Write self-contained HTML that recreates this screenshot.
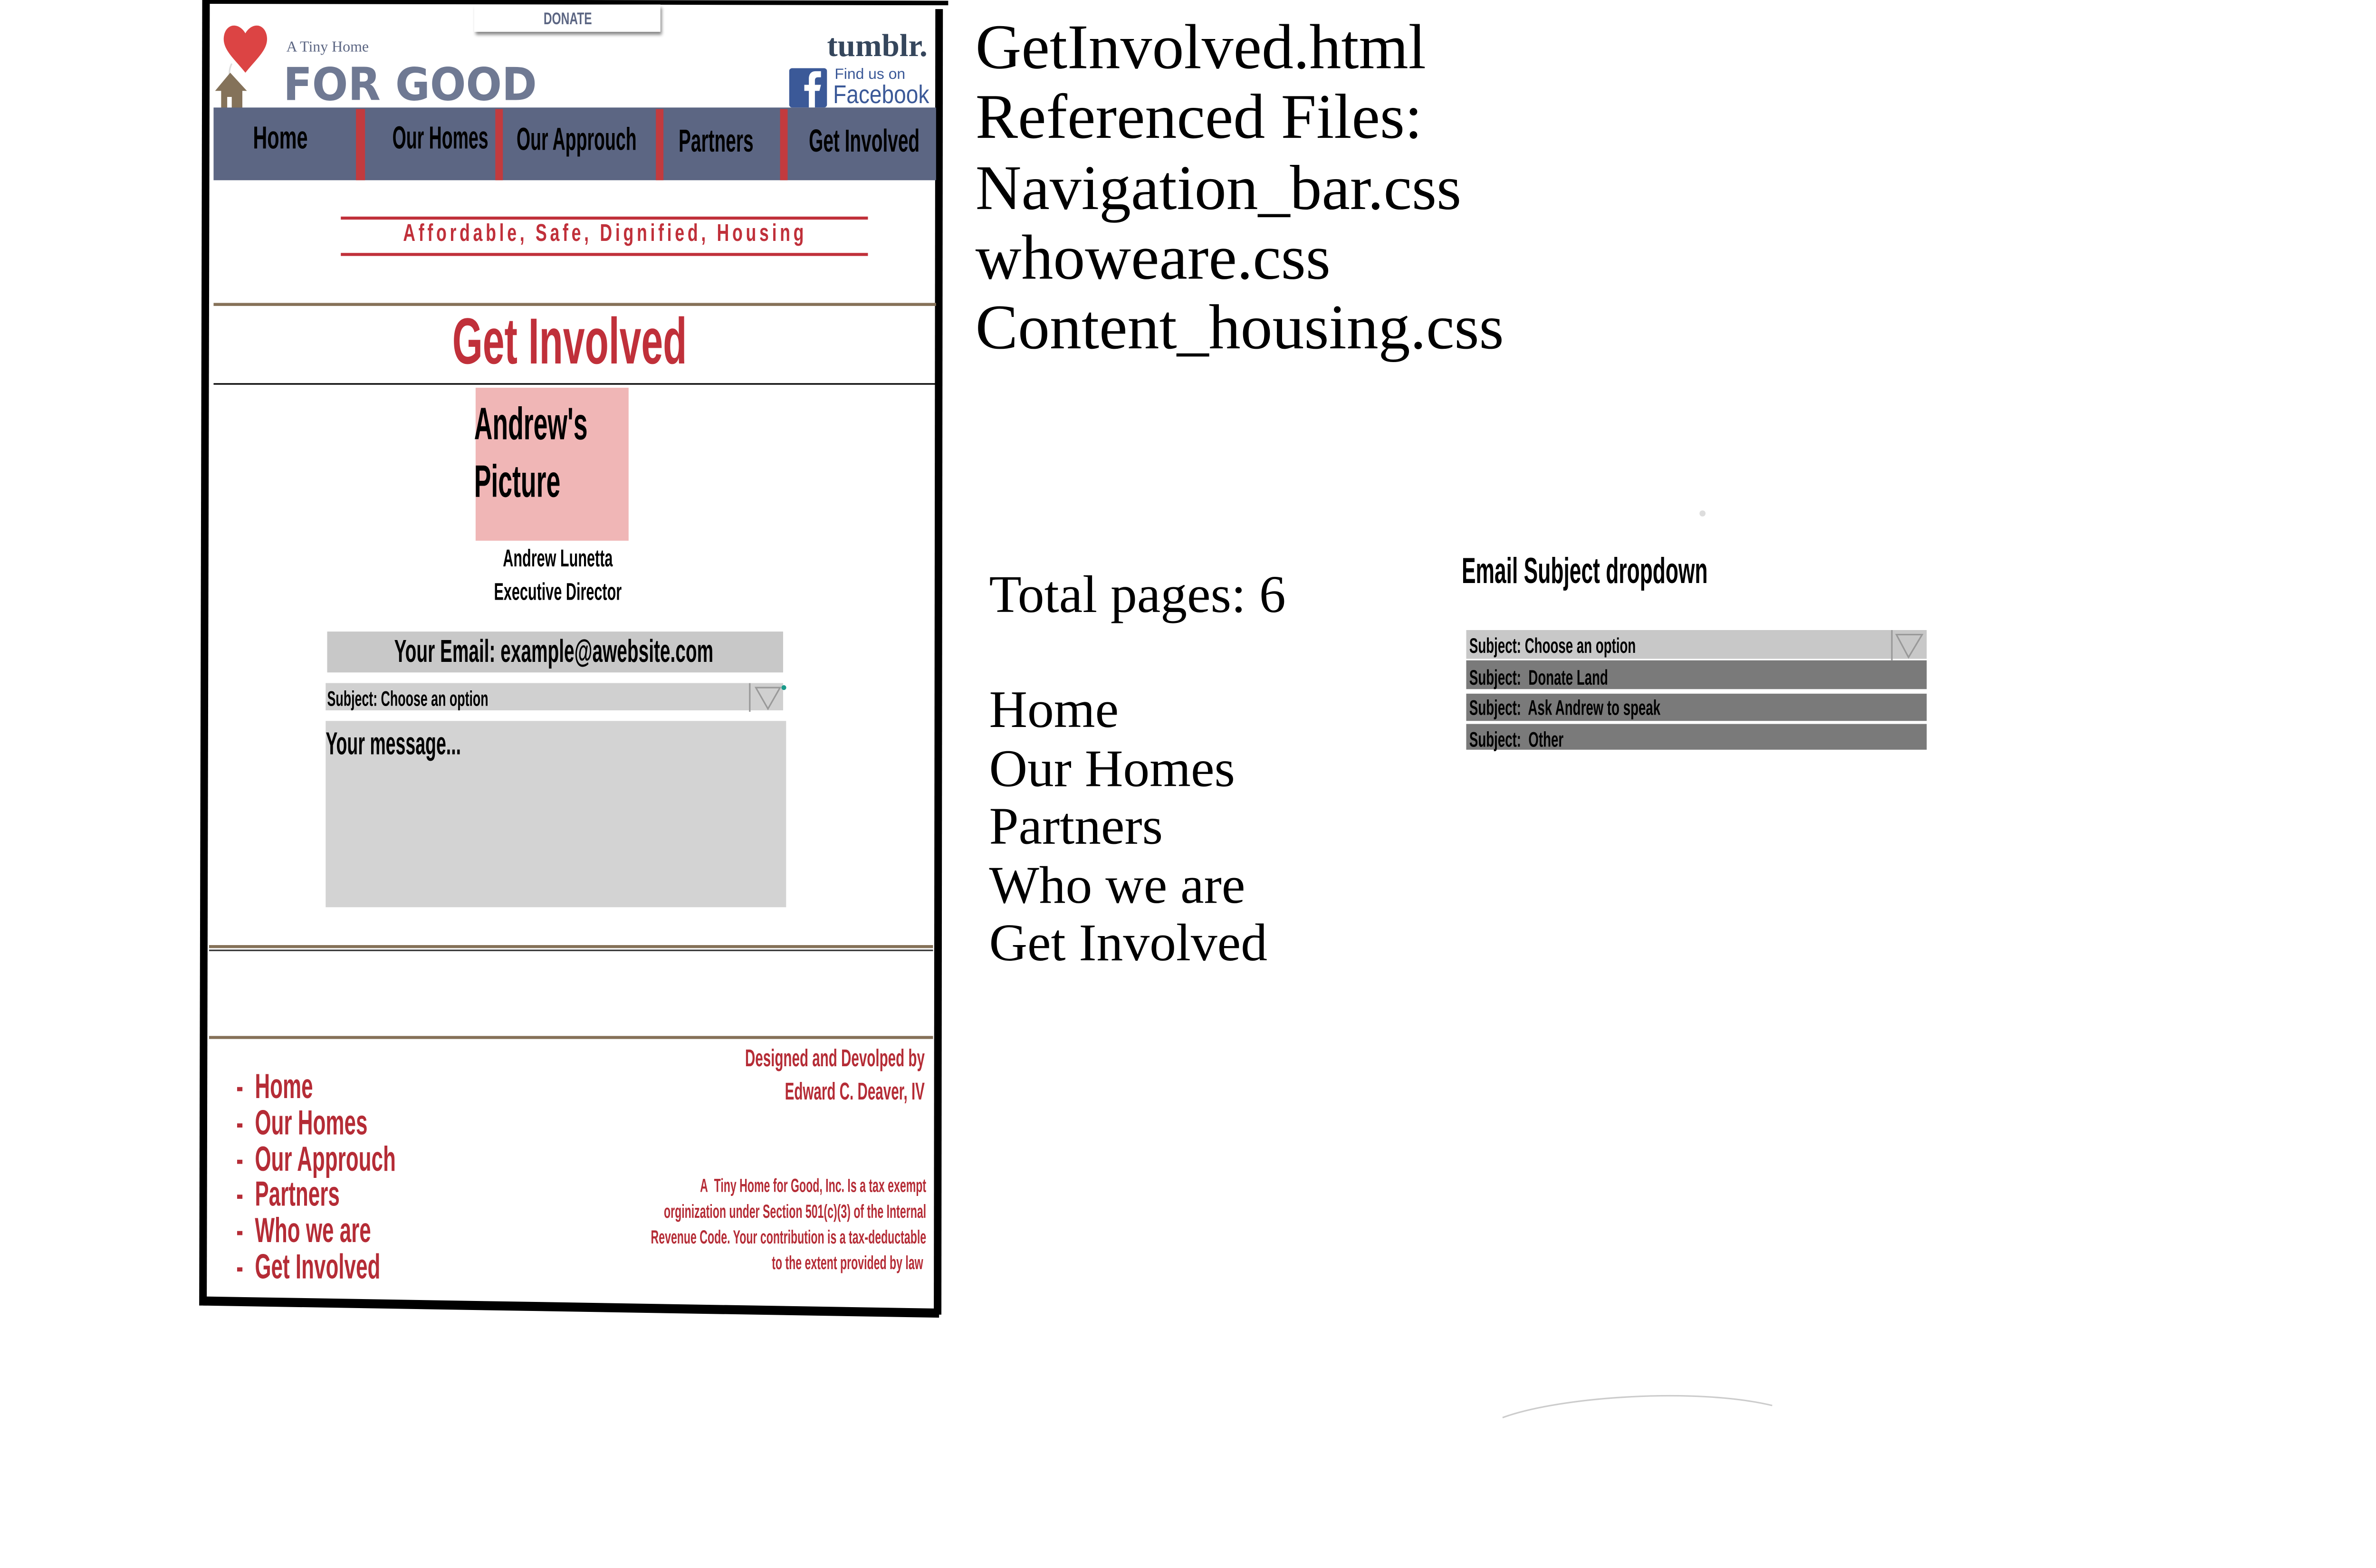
<!DOCTYPE html>
<html><head><meta charset="utf-8">
<style>
html,body{margin:0;padding:0;background:#fff;overflow:hidden}
body{width:5100px;height:3300px;position:relative}
#w{position:absolute;left:0;top:0;width:1600px;height:1036px;transform:scale(3.1875);transform-origin:0 0}
.a{position:absolute;white-space:nowrap}
.n{font-family:"Liberation Sans Narrow","Liberation Sans",sans-serif;font-weight:bold;display:inline-block;transform-origin:0 50%}
.s{font-family:"Liberation Serif",serif}
.r{color:#c0303a}
.red{color:#b52c36}
</style></head><body><div id="w">

<!-- frame -->
<svg class="a" style="left:0;top:0" width="1600" height="1036">
<line x1="136" y1="0" x2="134" y2="862" stroke="#000" stroke-width="5"/>
<line x1="134" y1="859" x2="620" y2="867" stroke="#000" stroke-width="6"/>
<line x1="620" y1="6" x2="619" y2="868" stroke="#000" stroke-width="5"/>
<line x1="136" y1="1" x2="626" y2="2" stroke="#000" stroke-width="3"/>
<path d="M992 936 C1030 922 1120 916 1170 928" stroke="#ccc" fill="none" stroke-width="1"/>
<circle cx="1124" cy="339" r="2" fill="#ddd"/>
</svg>

<!-- header -->
<div class="a" style="left:313px;top:3px;width:123px;height:18px;background:#fff;box-shadow:1px 2px 2px #888;text-align:center;">
<span class="n" style="font-size:11px;color:#5c6683;line-height:18px;transform:scaleX(.7);transform-origin:50% 50%">DONATE</span></div>
<svg class="a" style="left:140px;top:12px" width="45" height="62">
<path d="M22 36 C14 26 6 20 8 11 C10 3 18 3 22 10 C26 3 34 3 36 11 C38 20 30 26 22 36Z" fill="#dc4444"/>
<path d="M13 30 C10 36 12 40 13 46" stroke="#ddd" fill="none" stroke-width="1"/>
<path d="M12 36 L2 48 L6 48 L6 60 L10 60 L10 52 L13 52 L13 60 L20 60 L20 48 L23 48Z" fill="#84725a"/>
</svg>
<div class="a s" style="left:189px;top:26px;font-size:10px;color:#5c6683">A Tiny Home</div>
<div class="a" style="left:187px;top:40px;font-family:'DejaVu Sans','Liberation Sans',sans-serif;font-weight:bold;font-size:30px;color:#6f7993;line-height:34px;display:inline-block;transform:scaleX(.93);transform-origin:0 0">FOR GOOD</div>
<div class="a s" style="left:546px;top:16px;font-size:21px;font-weight:bold;color:#35465c;line-height:28px">tumblr.</div>
<svg class="a" style="left:521px;top:45px" width="25" height="26"><rect width="25" height="26" rx="2" fill="#3b5998"/><path d="M17 26 V15 H20 L21 11 H17 V8 C17 6.5 18 6 19 6 H21 V2 H17.5 C14 2 13 4.5 13 7 V11 H10 V15 H13 V26Z" fill="#fff"/></svg>
<div class="a" style="left:551px;top:44px;font-family:'Liberation Sans',sans-serif;font-size:10px;color:#3b5998">Find us on</div>
<div class="a" style="left:550px;top:53px"><span class="n" style="font-size:17px;font-weight:normal;color:#3b5998;transform:scaleX(.85);transform-origin:0 0">Facebook</span></div>

<!-- nav -->
<div class="a" style="left:141px;top:71px;width:477px;height:48px;background:#5c6683"></div>
<div class="a" style="left:235px;top:72px;width:6px;height:47px;background:#c23b3e"></div>
<div class="a" style="left:327px;top:72px;width:5px;height:47px;background:#c23b3e"></div>
<div class="a" style="left:433px;top:72px;width:5px;height:47px;background:#c23b3e"></div>
<div class="a" style="left:515px;top:72px;width:5px;height:47px;background:#c23b3e"></div>
<div class="a" style="left:167px;top:80px"><span class="n" style="font-size:21px;transform:scaleX(.62)">Home</span></div>
<div class="a" style="left:259px;top:80px"><span class="n" style="font-size:21px;transform:scaleX(.56)">Our Homes</span></div>
<div class="a" style="left:341px;top:81px"><span class="n" style="font-size:21px;transform:scaleX(.56)">Our Approuch</span></div>
<div class="a" style="left:448px;top:82px"><span class="n" style="font-size:21px;transform:scaleX(.58)">Partners</span></div>
<div class="a" style="left:534px;top:82px"><span class="n" style="font-size:21px;transform:scaleX(.58)">Get Involved</span></div>

<!-- tagline -->
<div class="a" style="left:225px;top:143px;width:348px;height:2px;background:#c0303a"></div>
<div class="a" style="left:225px;top:167px;width:348px;height:2px;background:#c0303a"></div>
<div class="a" style="left:99px;top:146px;width:600px;text-align:center"><span class="n r" style="font-size:16px;letter-spacing:3px;transform:scaleX(.7);transform-origin:50% 50%">Affordable, Safe, Dignified, Housing</span></div>
<div class="a" style="left:141px;top:200px;width:477px;height:2px;background:#857158"></div>
<div class="a" style="left:76px;top:202px;width:600px;text-align:center"><span class="n r" style="font-size:43px;transform:scaleX(.6);transform-origin:50% 50%">Get Involved</span></div>
<div class="a" style="left:141px;top:253px;width:477px;height:1px;background:#000"></div>

<!-- picture -->
<div class="a" style="left:314px;top:256px;width:101px;height:101px;background:#f0b6b6"></div>
<div class="a" style="left:313px;top:262px"><span class="n" style="font-size:30px;line-height:38px;transform:scaleX(.56);transform-origin:0 0">Andrew's<br>Picture</span></div>
<div class="a" style="left:168px;top:359px;width:400px;text-align:center;line-height:22px"><span class="n" style="font-size:16px;transform:scaleX(.6);transform-origin:50% 0">Andrew Lunetta<br>Executive Director</span></div>

<!-- form -->
<div class="a" style="left:216px;top:417px;width:301px;height:27px;background:#c8c8c8"></div>
<div class="a" style="left:66px;top:417px;width:600px;text-align:center"><span class="n" style="font-size:21px;line-height:27px;transform:scaleX(.58);transform-origin:50% 50%">Your Email: example@awebsite.com</span></div>
<div class="a" style="left:215px;top:451px;width:302px;height:18px;background:#d0d0d0"></div>
<div class="a" style="left:216px;top:452px"><span class="n" style="font-size:14px;line-height:18px;transform:scaleX(.6)">Subject: Choose an option</span></div>
<svg class="a" style="left:494px;top:451px" width="26" height="19"><line x1="1" y1="0" x2="1" y2="19" stroke="#999"/><path d="M5 3 L21 3 L13 17Z" fill="none" stroke="#999"/><circle cx="23.5" cy="3" r="1.6" fill="#1a9a8a"/></svg>
<div class="a" style="left:215px;top:476px;width:304px;height:123px;background:#d3d3d3"></div>
<div class="a" style="left:215px;top:480px"><span class="n" style="font-size:21px;transform:scaleX(.56)">Your message...</span></div>

<div class="a" style="left:138px;top:624px;width:478px;height:2px;background:#857158"></div>
<div class="a" style="left:138px;top:627px;width:478px;height:1px;background:#333"></div>
<div class="a" style="left:138px;top:684px;width:478px;height:2px;background:#857158"></div>

<!-- footer -->
<div class="a red" style="left:156px;top:706px;line-height:23.8px"><span class="n" style="font-size:23px;transform:scaleX(.6);transform-origin:0 0">-&nbsp; Home<br>-&nbsp; Our Homes<br>-&nbsp; Our Approuch<br>-&nbsp; Partners<br>-&nbsp; Who we are<br>-&nbsp; Get Involved</span></div>
<div class="a red" style="left:0px;top:689px;width:610px;text-align:right;line-height:22px"><span class="n" style="font-size:16px;transform:scaleX(.58);transform-origin:100% 0">Designed and Devolped by<br>Edward C. Deaver, IV</span></div>
<div class="a red" style="left:0px;top:775px;width:611px;text-align:right;line-height:17px"><span class="n" style="font-size:12.5px;transform:scaleX(.58);transform-origin:100% 0">A&nbsp; Tiny Home for Good, Inc. Is a tax exempt<br>orginization under Section 501(c)(3) of the Internal<br>Revenue Code. Your contribution is a tax-deductable<br>to the extent provided by law&nbsp;</span></div>

<!-- right notes -->
<div class="a s" style="left:644px;top:9px;font-size:42px;line-height:46.3px">GetInvolved.html<br>Referenced Files:<br>Navigation_bar.css<br>whoweare.css<br>Content_housing.css</div>
<div class="a s" style="left:653px;top:373px;font-size:35px;line-height:40px">Total pages: 6</div>
<div class="a s" style="left:653px;top:450px;font-size:35px;line-height:38.5px">Home<br>Our Homes<br>Partners<br>Who we are<br>Get Involved</div>

<div class="a" style="left:965px;top:364px"><span class="n" style="font-size:24px;transform:scaleX(.58)">Email Subject dropdown</span></div>
<div class="a" style="left:968px;top:416px;width:304px;height:19px;background:#c8c8c8"></div>
<svg class="a" style="left:1248px;top:416px" width="24" height="20"><line x1="1" y1="0" x2="1" y2="20" stroke="#999"/><path d="M4 3 L21 3 L12 18Z" fill="none" stroke="#999"/></svg>
<div class="a" style="left:968px;top:436px;width:304px;height:19px;background:#7a7a7a"></div>
<div class="a" style="left:968px;top:458px;width:304px;height:18px;background:#7a7a7a"></div>
<div class="a" style="left:968px;top:478px;width:304px;height:17px;background:#7a7a7a"></div>
<div class="a" style="left:970px;top:416px;line-height:20.5px"><span class="n" style="font-size:14px;transform:scaleX(.62);transform-origin:0 0">Subject: Choose an option<br>Subject:&nbsp; Donate Land<br>Subject:&nbsp; Ask Andrew to speak<br>Subject:&nbsp; Other</span></div>

</div></body></html>
